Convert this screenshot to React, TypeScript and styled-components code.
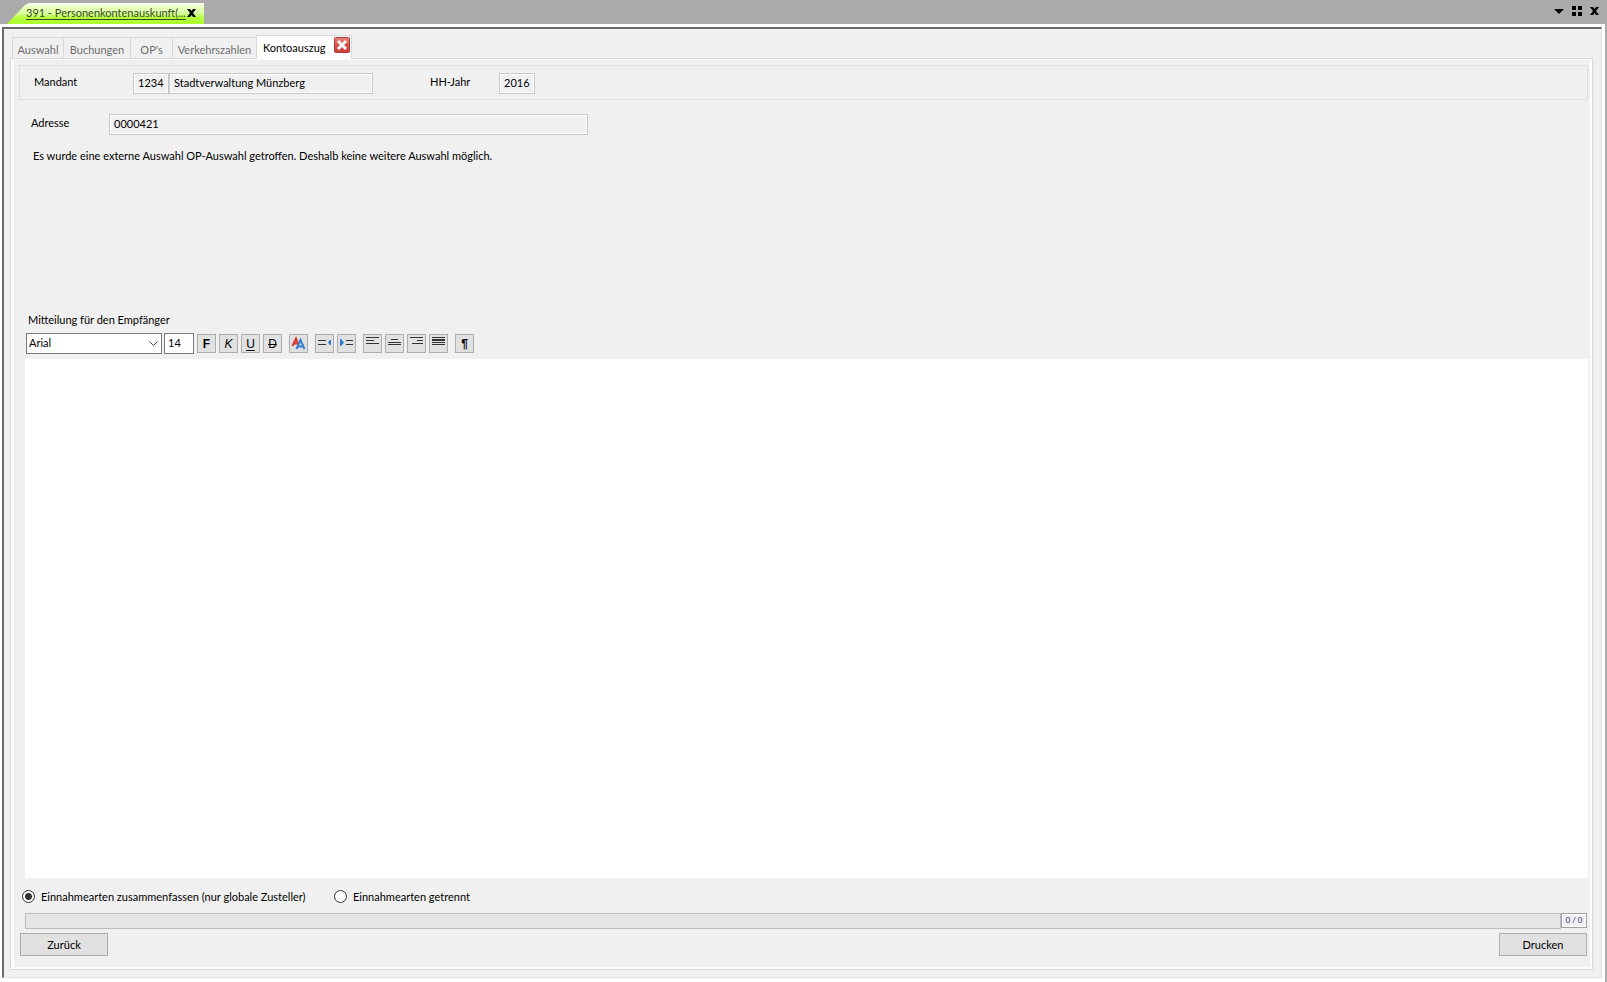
import React, { useState } from "react";
import styled, { createGlobalStyle } from "styled-components";

const GlobalStyle = createGlobalStyle`
  *, *::before, *::after { box-sizing: border-box; }
  body { margin: 0; background: #fff; }
  body, button, input, select, textarea {
    font-family: Lato, "Liberation Sans", sans-serif;
    font-size: 11px;
    line-height: 14px;
    color: #000;
  }
  button, input, select, textarea { margin: 0; border-radius: 0; outline: none; }
`;

const Window = styled.div`
  display: flex;
  flex-direction: column;
  min-height: 100vh;
`;

const TitleBar = styled.header`
  display: flex;
  align-items: flex-end;
  justify-content: space-between;
  height: 24px;
  padding: 0 8px 0 7px;
  background: #ababab;
`;

const DocumentTab = styled.div`
  display: flex;
  align-items: center;
  width: 197px;
  height: 21px;
  padding: 0 8px 2px 19px;
  background: linear-gradient(#fff 1px, #ecffd0 2px, #d9ff9c 50%, #b4ff3c 70%, #adff2f);
  clip-path: polygon(0 100%, 18px 2px, 22px 0, 100% 0, 100% 100%);
`;

const DocumentLink = styled.a`
  flex: 1;
  color: #3a4a20;
  white-space: nowrap;
  text-decoration: underline;
  text-underline-offset: 2px;
`;

const GlyphButton = styled.button`
  display: flex;
  padding: 0;
  border: 0;
  background: none;
`;

const WindowControls = styled.div`
  display: flex;
  align-items: center;
  gap: 8px;
  height: 22px;
  margin-bottom: 2px;
`;

const Border = styled.div`
  display: flex;
  flex: 1;
  padding: 3px 3px 4px 2px;
  border-right: 2px solid #ababab;
`;

const Sunken = styled.main`
  display: flex;
  flex: 1;
  flex-direction: column;
  min-width: 0;
  padding: 6px 8px 7px 6px;
  background: #f0f0f0;
  border: 1px solid #e3e3e3;
  border-top: 2px solid #696969;
  border-left: 2px solid #696969;
  box-shadow: inset 0 1px #fafafa;
`;

const TabStrip = styled.nav`
  display: flex;
  align-items: flex-end;
  height: 23px;
  padding-left: 2px;
`;

const PageTab = styled.button<{ $width: number }>`
  width: ${(p) => p.$width}px;
  height: 21px;
  padding: 3px 0 0;
  color: #6d6d6d;
  text-align: center;
  white-space: nowrap;
  background: #f0f0f0;
  border: 1px solid #d9d9d9;
  border-width: 1px 0 0 1px;
`;

const ActiveTab = styled.div`
  display: flex;
  align-items: center;
  justify-content: space-between;
  width: 96px;
  height: 24px;
  margin-bottom: -1px;
  padding: 0 1px 5px 6px;
  background: #fff;
  border: 1px solid #d9d9d9;
  border-bottom: 0;
  z-index: 1;
`;

const ActiveLabel = styled.button`
  padding: 5px 0 0;
  border: 0;
  background: none;
`;

const Page = styled.section`
  display: flex;
  flex: 1;
  flex-direction: column;
  padding: 6px 4px 13px 8px;
  border: 1px solid #d9d9d9;
  box-shadow: inset 3px 1px #fff, inset -2px -2px #fff;
`;

const GroupBox = styled.div`
  display: flex;
  align-items: center;
  height: 35px;
  padding: 2px 14px 0;
  border: 1px solid #dedede;
`;

const AddressRow = styled.div`
  display: flex;
  margin-top: 14px;
  padding-left: 12px;
`;

const FieldLabel = styled.label<{ $width: number }>`
  width: ${(p) => p.$width}px;
  height: 21px;
  padding-top: 2px;
`;

const ReadField = styled.input<{ $width: number; $after?: number }>`
  width: ${(p) => p.$width}px;
  height: 21px;
  margin-right: ${(p) => p.$after ?? 0}px;
  padding: 0 4px 3px;
  background: #f0f0f0;
  border: 1px solid #c8c8c8;
  box-shadow: inset 0 0 0 1px #fff;
`;

const Notice = styled.p`
  min-height: 178px;
  margin: 0;
  padding: 14px 14px 0;
`;

const MessageLabel = styled.label`
  padding-left: 9px;
`;

const Toolbar = styled.div`
  display: flex;
  align-items: center;
  gap: 7px;
  height: 21px;
  margin: 6px 0 5px 7px;
`;

const ToolGroup = styled.div`
  display: flex;
  align-items: center;
  gap: 3px;
`;

const FontPickers = styled(ToolGroup)`
  gap: 2px;
  margin-right: -4px;
`;

const SelectBox = styled.div`
  display: grid;
  align-items: center;
  width: 136px;
  > * { grid-area: 1 / 1; }
  > svg { justify-self: end; margin-right: 4px; pointer-events: none; }
`;

const FontSelect = styled.select`
  appearance: none;
  width: 100%;
  height: 21px;
  padding: 0 20px 1px 2px;
  background: #fff;
  border: 1px solid #7a7a7a;
`;

const SizeInput = styled.input`
  width: 30px;
  height: 21px;
  padding: 0 2px 2px 3px;
  background: #fff;
  border: 1px solid #7a7a7a;
`;

const ToolButton = styled.button`
  display: flex;
  width: 19px;
  height: 19px;
  padding: 0;
  background: #e1e1e1;
  border: 1px solid #adadad;
`;

const Letter = styled.span<{ $kind: "bold" | "italic" | "underline" | "strike" | "mark" }>`
  flex: 1;
  line-height: 18px;
  text-align: center;
  font-family: "Liberation Sans", Arial, sans-serif;
  font-size: 12px;
  font-weight: ${(p) => (p.$kind === "bold" || p.$kind === "mark" ? 700 : 400)};
  font-style: ${(p) => (p.$kind === "italic" ? "italic" : "normal")};
  text-decoration: ${(p) =>
    p.$kind === "underline" ? "underline" : p.$kind === "strike" ? "line-through" : "none"};
  text-underline-offset: 2px;
`;

const Message = styled.textarea`
  flex: 1;
  min-height: 200px;
  margin-left: 6px;
  padding: 4px;
  font-family: "Liberation Sans", Arial, sans-serif;
  font-size: 14px;
  background: #fff;
  border: 0;
  resize: none;
`;

const Options = styled.div`
  display: flex;
  align-items: center;
  height: 35px;
  padding: 2px 0 0 3px;
`;

const Option = styled.label`
  display: flex;
  align-items: center;
  gap: 6px;
  min-width: 312px;
`;

const Radio = styled.input`
  appearance: none;
  width: 13px;
  height: 13px;
  background: #fff;
  border: 1px solid #333;
  border-radius: 50%;
  &:checked { background: radial-gradient(circle, #333 3px, #fff 4px); }
`;

const ProgressRow = styled.div`
  display: flex;
  align-items: flex-start;
  height: 20px;
  padding: 0 1px 0 6px;
`;

const ProgressTrack = styled.div`
  flex: 1;
  height: 16px;
  background: #e6e6e6;
  border: 1px solid #bcbcbc;
`;

const Counter = styled.output`
  width: 26px;
  height: 15px;
  color: #1f1f5c;
  font-size: 8px;
  line-height: 13px;
  text-align: center;
  background: #f0f0f0;
  border: 1px solid #a0a0a0;
  box-shadow: inset 0 0 0 1px #fff;
`;

const Actions = styled.footer`
  display: flex;
  justify-content: space-between;
  padding: 0 1px;
`;

const ActionButton = styled.button`
  width: 88px;
  height: 23px;
  padding: 0 4px;
  background: #e1e1e1;
  border: 1px solid #adadad;
`;

const Cross = () => (
  <svg width="9" height="8" viewBox="0 0 9 8">
    <path d="M0 0h3l1.500 2L6 0h3L6 4l3 4H6L4.500 6L3 8H0l3-4z" />
  </svg>
);

const RedClose = () => (
  <svg width="16" height="16" viewBox="0 0 16 16">
    <defs>
      <linearGradient id="red" x1="0" y1="0" x2="0" y2="1">
        <stop offset="0" stopColor="#e58a80" />
        <stop offset="0.5" stopColor="#d8534c" />
        <stop offset="1" stopColor="#c9413d" />
      </linearGradient>
    </defs>
    <rect x="0.5" y="0.5" width="15" height="15" rx="1" fill="url(#red)" stroke="#b03a38" />
    <path d="M3 5l2-2 3 3 3-3 2 2-3 3 3 3-2 2-3-3-3 3-2-2 3-3z" fill="#fff" />
  </svg>
);

const Lines = ({ rows }: { rows: [number, number, number][] }) => (
  <svg width="17" height="17" viewBox="0 0 17 17" shapeRendering="crispEdges">
    {rows.map(([x, y, w]) => (
      <rect key={y} x={x} y={y} width={w} height="1" fill="#333" />
    ))}
  </svg>
);

const Indent = ({ right }: { right?: boolean }) => (
  <svg width="17" height="17" viewBox="0 0 17 17">
    <path d={right ? "M8 5.500h7M8 9.500h7" : "M2 5.500h8M2 9.500h8"} stroke="#333" />
    <path d={right ? "M2 4v7h1l3-3.500-3-3.500z" : "M15 5v5h-1l-2-2.500 2-2.500z"} fill="#2b7cd3" />
  </svg>
);

const FontColor = () => (
  <svg width="17" height="17" viewBox="0 0 17 17" fill="none">
    <path d="M2.500 11L6 3.500L8.500 10M4 8.500h4" stroke="#d8342c" strokeWidth="2" />
    <path d="M6.500 14L10.500 5L14.500 14M8 11.500h5.500" stroke="#3a7bd0" strokeWidth="2" />
  </svg>
);

const aligns: { name: string; rows: [number, number, number][] }[] = [
  { name: "Linksbündig", rows: [[2, 2, 13], [2, 5, 8], [2, 8, 13]] },
  { name: "Zentriert", rows: [[5, 4, 7], [2, 7, 13], [2, 9, 13]] },
  { name: "Rechtsbündig", rows: [[2, 2, 13], [9, 5, 6], [4, 8, 11]] },
  { name: "Blocksatz", rows: [[2, 2, 13], [2, 4, 13], [2, 5, 13], [2, 7, 13], [2, 9, 13]] },
];

export default function App() {
  const [mode, setMode] = useState("sum");
  return (
    <Window>
      <GlobalStyle />
      <TitleBar>
        <DocumentTab>
          <DocumentLink href="#391">391 - Personenkontenauskunft(...</DocumentLink>
          <GlyphButton aria-label="Dokument schließen"><Cross /></GlyphButton>
        </DocumentTab>
        <WindowControls>
          <GlyphButton aria-label="Fensterliste">
            <svg width="10" height="6" viewBox="0 0 10 6"><path d="M0 1h10L5 6z" /></svg>
          </GlyphButton>
          <GlyphButton aria-label="Anordnen">
            <svg width="10" height="10" viewBox="0 0 10 10" shapeRendering="crispEdges">
              <path d="M0 0h4v4H0zM6 0h4v4H6zM0 6h4v4H0zM6 6h4v4H6z" />
            </svg>
          </GlyphButton>
          <GlyphButton aria-label="Schließen"><Cross /></GlyphButton>
        </WindowControls>
      </TitleBar>
      <Border>
        <Sunken>
          <TabStrip>
            <PageTab $width={51}>Auswahl</PageTab>
            <PageTab $width={67}>Buchungen</PageTab>
            <PageTab $width={42}>OP's</PageTab>
            <PageTab $width={84}>Verkehrszahlen</PageTab>
            <ActiveTab>
              <ActiveLabel>Kontoauszug</ActiveLabel>
              <GlyphButton aria-label="Kontoauszug schließen"><RedClose /></GlyphButton>
            </ActiveTab>
          </TabStrip>
          <Page>
            <GroupBox>
              <FieldLabel $width={99} htmlFor="mandant">Mandant</FieldLabel>
              <ReadField $width={36} id="mandant" readOnly value="1234" />
              <ReadField $width={204} $after={57} aria-label="Mandantenname" readOnly value="Stadtverwaltung Münzberg" />
              <FieldLabel $width={69} htmlFor="jahr">HH-Jahr</FieldLabel>
              <ReadField $width={36} id="jahr" readOnly value="2016" />
            </GroupBox>
            <AddressRow>
              <FieldLabel $width={78} htmlFor="adresse">Adresse</FieldLabel>
              <ReadField $width={479} id="adresse" readOnly value="0000421" />
            </AddressRow>
            <Notice>
              Es wurde eine externe Auswahl OP-Auswahl getroffen. Deshalb keine weitere Auswahl möglich.
            </Notice>
            <MessageLabel htmlFor="mitteilung">Mitteilung für den Empfänger</MessageLabel>
            <Toolbar>
              <FontPickers>
                <SelectBox>
                  <FontSelect aria-label="Schriftart" defaultValue="Arial">
                    <option>Arial</option>
                  </FontSelect>
                  <svg width="9" height="6" viewBox="0 0 9 6" fill="none">
                    <path d="M0.500 0.500l4 4 4-4" stroke="#444" />
                  </svg>
                </SelectBox>
                <SizeInput aria-label="Schriftgröße" defaultValue="14" />
              </FontPickers>
              <ToolGroup>
                <ToolButton aria-label="Fett"><Letter $kind="bold">F</Letter></ToolButton>
                <ToolButton aria-label="Kursiv"><Letter $kind="italic">K</Letter></ToolButton>
                <ToolButton aria-label="Unterstrichen"><Letter $kind="underline">U</Letter></ToolButton>
                <ToolButton aria-label="Durchgestrichen"><Letter $kind="strike">D</Letter></ToolButton>
              </ToolGroup>
              <ToolButton aria-label="Schriftfarbe"><FontColor /></ToolButton>
              <ToolGroup>
                <ToolButton aria-label="Einzug verkleinern"><Indent /></ToolButton>
                <ToolButton aria-label="Einzug vergrößern"><Indent right /></ToolButton>
              </ToolGroup>
              <ToolGroup>
                {aligns.map((a) => (
                  <ToolButton key={a.name} aria-label={a.name}><Lines rows={a.rows} /></ToolButton>
                ))}
              </ToolGroup>
              <ToolButton aria-label="Absatz"><Letter $kind="mark">¶</Letter></ToolButton>
            </Toolbar>
            <Message id="mitteilung" />
            <Options>
              <Option>
                <Radio type="radio" name="mode" checked={mode === "sum"} onChange={() => setMode("sum")} />
                Einnahmearten zusammenfassen (nur globale Zusteller)
              </Option>
              <Option>
                <Radio type="radio" name="mode" checked={mode === "split"} onChange={() => setMode("split")} />
                Einnahmearten getrennt
              </Option>
            </Options>
            <ProgressRow>
              <ProgressTrack role="progressbar" aria-label="Fortschritt" aria-valuenow={0} />
              <Counter>0 / 0</Counter>
            </ProgressRow>
            <Actions>
              <ActionButton>Zurück</ActionButton>
              <ActionButton>Drucken</ActionButton>
            </Actions>
          </Page>
        </Sunken>
      </Border>
    </Window>
  );
}
